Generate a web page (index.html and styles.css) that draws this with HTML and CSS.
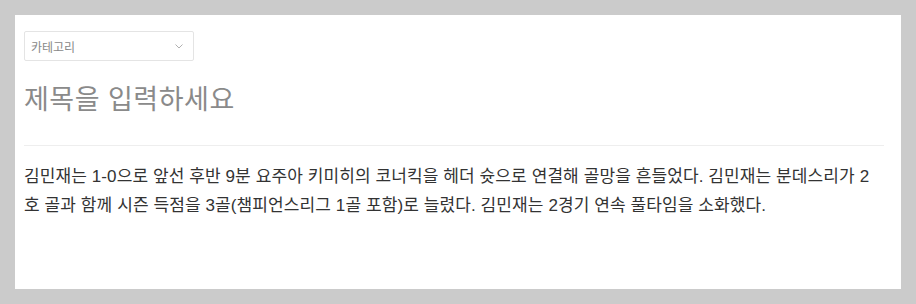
FILE: index.html
```html
<!DOCTYPE html>
<html lang="ko">
<head>
<meta charset="utf-8">
<link rel="stylesheet" href="styles.css">
</head>
<body>
<div class="card">
  <div class="select">
    <span class="select-label">카테고리</span>
    <svg class="chev" width="8" height="5" viewBox="0 0 8 5"><path d="M0.5 0.5 L4 4 L7.5 0.5" fill="none" stroke="#b0b0b0" stroke-width="1"/></svg>
  </div>
  <h1 class="title">제목을 입력하세요</h1>
  <hr class="divider">
  <p class="body">김민재는 1-0으로 앞선 후반 9분 요주아 키미히의 코너킥을 헤더 슛으로 연결해 골망을 흔들었다. 김민재는 분데스리가 2호 골과 함께 시즌 득점을 3골(챔피언스리그 1골 포함)로 늘렸다. 김민재는 2경기 연속 풀타임을 소화했다.</p>
</div>
</body>
</html>
```
FILE: styles.css
```css
html, body {
  margin: 0;
  padding: 0;
}
body {
  background: #cbcbcb;
  padding: 15px;
  font-family: "Liberation Sans", "Noto Sans CJK KR", sans-serif;
}
.card {
  background: #fff;
  height: 274px;
  box-sizing: border-box;
  padding: 16px 17px 0 9px;
}
.select {
  width: 170px;
  height: 30px;
  box-sizing: border-box;
  border: 1px solid #e4e4e4;
  border-radius: 2px;
  display: flex;
  align-items: center;
  justify-content: space-between;
  padding: 0 10px 0 6px;
}
.select-label {
  font-size: 12px;
  color: #888;
}
.chev {
  display: block;
}
.title {
  margin: 21px 0 0 0;
  font-size: 27px;
  letter-spacing: 0.5px;
  line-height: 36px;
  font-weight: normal;
  color: #8a8a8a;
}
.divider {
  margin: 27px 0 0 0;
  border: 0;
  border-top: 1px solid #eeeeee;
  height: 0;
}
.body {
  margin: 16px 0 0 0;
  font-size: 17px;
  letter-spacing: 0.1px;
  line-height: 29px;
  color: #333;
}
```
